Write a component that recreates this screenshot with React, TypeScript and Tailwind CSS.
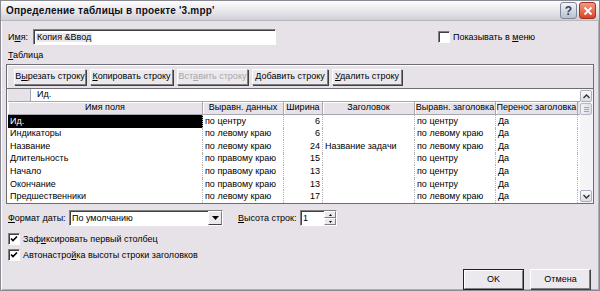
import React from 'react';

const font = { fontFamily: '"Liberation Sans", Arial, sans-serif' };

function U({ children }: { children: React.ReactNode }) {
  return <span className="underline underline-offset-[1px]">{children}</span>;
}

function Btn({ children, w, disabled }: { children: React.ReactNode; w: string; disabled?: boolean }) {
  return (
    <div
      className={`${w} h-[16px] flex items-center justify-center border border-t-white border-l-white border-r-[#808080] border-b-[#808080] bg-[#ece9ee] shadow-[1px_1px_0_#404040] ${
        disabled ? 'text-[#a8a6ab]' : 'text-black'
      }`}
    >
      <span>{children}</span>
    </div>
  );
}

function Check({ checked }: { checked?: boolean }) {
  return (
    <div className="w-[12px] h-[12px] bg-white border border-t-[#808080] border-l-[#808080] border-r-white border-b-white shadow-[inset_1px_1px_0_#404040] flex items-center justify-center">
      {checked && (
        <svg width="8" height="8" viewBox="0 0 8 8">
          <path d="M1 3.5 L3 5.5 L7 1.5" stroke="#000" strokeWidth="1.6" fill="none" />
        </svg>
      )}
    </div>
  );
}

const cols = [
  { name: 'Имя поля', w: 'w-[195px]' },
  { name: 'Выравн. данных', w: 'w-[81px]' },
  { name: 'Ширина', w: 'w-[39px]' },
  { name: 'Заголовок', w: 'w-[92px]' },
  { name: 'Выравн. заголовка', w: 'w-[81px]' },
  { name: 'Перенос заголовка', w: 'w-[82px]' },
];

const rows = [
  ['Ид.', 'по центру', '6', '', 'по центру', 'Да'],
  ['Индикаторы', 'по левому краю', '6', '', 'по левому краю', 'Да'],
  ['Название', 'по левому краю', '24', 'Название задачи', 'по левому краю', 'Да'],
  ['Длительность', 'по правому краю', '15', '', 'по центру', 'Да'],
  ['Начало', 'по правому краю', '13', '', 'по центру', 'Да'],
  ['Окончание', 'по правому краю', '13', '', 'по центру', 'Да'],
  ['Предшественники', 'по левому краю', '17', '', 'по левому краю', 'Да'],
];

const sunken =
  'bg-white border border-t-[#808080] border-l-[#808080] border-r-white border-b-white shadow-[inset_1px_1px_0_#404040]';

export default function App() {
  return (
    <div
      style={font}
      className="w-[600px] h-[291px] bg-[#e6e2e8] text-[9px] text-black whitespace-nowrap border border-[#8a8a94] shadow-[inset_1px_1px_0_#ffffff,inset_-1px_-1px_0_#b0aeb6] flex flex-col overflow-hidden leading-none"
    >
      {/* Title bar */}
      <div className="h-[22px] flex items-center justify-between pl-[5px] pr-[3px] bg-gradient-to-b from-[#fdfdfd] via-[#e9e9ed] to-[#cfcfd6] border-b border-[#b8b6be]">
        <span className="font-bold text-[10px] tracking-[0.2px] text-[#101018]">Определение таблицы в проекте '3.mpp'</span>
        <div className="flex gap-[2px]">
          <div className="w-[17px] h-[17px] rounded-[3px] border border-[#7f8696] bg-gradient-to-b from-[#f4f6fa] to-[#b9bfcc] flex items-center justify-center font-bold text-[12px] text-[#3a4252]">
            ?
          </div>
          <div className="w-[17px] h-[17px] rounded-[3px] border border-[#a03020] bg-gradient-to-b from-[#f19a7f] to-[#d8401f] flex items-center justify-center">
            <svg width="10" height="10" viewBox="0 0 10 10">
              <path d="M1.5 1.5 L8.5 8.5 M8.5 1.5 L1.5 8.5" stroke="#fff" strokeWidth="1.8" />
            </svg>
          </div>
        </div>
      </div>

      <div className="flex-1 px-[5px] flex flex-col">
        {/* Name row */}
        <div className="flex items-center mt-[8px] h-[16px]">
          <span className="w-[27px] pl-[2px]">
            И<U>м</U>я:
          </span>
          <div className={`w-[243px] h-[16px] ${sunken} flex items-center pl-[2px]`}>
            <span className="bg-[#e8e8ee] px-[1px]">Копия &amp;Ввод</span>
          </div>
          <div className="flex items-center gap-[3px] ml-[162px]">
            <Check />
            <span>
              Показывать в <U>м</U>еню
            </span>
          </div>
        </div>

        <div className="mt-[6px] pl-[2px] h-[12px]">
          <U>Т</U>аблица
        </div>

        {/* Toolbar */}
        <div className="mt-[1px] h-[25px] border border-[#6e6c74] shadow-[inset_1px_1px_0_#ffffff] flex items-center gap-[4px] pl-[7px]">
          <Btn w="w-[72px]">
            В<U>ы</U>резать строку
          </Btn>
          <Btn w="w-[83px]">
            <U>К</U>опировать строку
          </Btn>
          <Btn w="w-[71px]" disabled>
            Вст<U>а</U>вить строку
          </Btn>
          <Btn w="w-[76px]">
            <U>Д</U>обавить строку
          </Btn>
          <Btn w="w-[70px]">
            <U>У</U>далить строку
          </Btn>
        </div>

        {/* Grid */}
        <div className="h-[115px] border border-t-0 border-[#6e6c74] flex">
          <div className="flex-1 flex flex-col pl-[1px] bg-white">
            {/* edit row */}
            <div className="h-[13px] flex border-b border-[#a8a6ae]">
              <div className="w-[23px] bg-[#e6e2e8] border-r border-[#a8a6ae]" />
              <div className="flex-1 bg-white flex items-center pl-[6px]">Ид.</div>
            </div>
            {/* header */}
            <div className="h-[13px] flex bg-[#e6e2e8] border-b border-[#a8a6ae]">
              {cols.map((c) => (
                <div
                  key={c.name}
                  className={`${c.w} flex items-center justify-center border-r border-[#a8a6ae] shadow-[inset_1px_1px_0_#ffffff] overflow-hidden`}
                >
                  {c.name}
                </div>
              ))}
            </div>
            {rows.map((r, i) => (
              <div key={i} className="h-[12.6px] flex">
                {r.map((v, j) => (
                  <div
                    key={j}
                    className={`${cols[j].w} flex items-center overflow-hidden border-r border-dotted border-[#b4b2b8] ${
                      j === 2 ? 'justify-end pr-[2px]' : 'pl-[2px]'
                    } ${i === 0 && j === 0 ? 'bg-black text-white' : ''}`}
                  >
                    {v}
                  </div>
                ))}
              </div>
            ))}
          </div>
          {/* scrollbar */}
          <div className="w-[13px] bg-[#f4f3f6] flex flex-col justify-between py-[1px] pr-[1px]">
            <div className="flex flex-col">
              <div className="h-[12px] rounded-[2px] border border-[#a9aec0] bg-gradient-to-b from-[#fbfbfd] to-[#dcdde6] flex items-center justify-center">
                <svg width="7" height="5" viewBox="0 0 7 5">
                  <path d="M0.5 4 L3.5 1 L6.5 4" stroke="#333" strokeWidth="1.4" fill="none" />
                </svg>
              </div>
              <div className="h-[12px] mt-[1px] rounded-[2px] border border-[#b4b8c8] bg-gradient-to-r from-[#f2f2f6] to-[#dcdde6] flex flex-col items-center justify-center gap-[1px]">
                <div className="w-[5px] h-px bg-[#a0a4b4]" />
                <div className="w-[5px] h-px bg-[#a0a4b4]" />
                <div className="w-[5px] h-px bg-[#a0a4b4]" />
              </div>
            </div>
            <div className="h-[12px] rounded-[2px] border border-[#a9aec0] bg-gradient-to-b from-[#fbfbfd] to-[#dcdde6] flex items-center justify-center">
              <svg width="7" height="5" viewBox="0 0 7 5">
                <path d="M0.5 1 L3.5 4 L6.5 1" stroke="#333" strokeWidth="1.4" fill="none" />
              </svg>
            </div>
          </div>
        </div>

        {/* Date format row */}
        <div className="flex items-center mt-[6px] h-[16px]">
          <span className="w-[63px] pl-[2px]">
            <U>Ф</U>ормат даты:
          </span>
          <div className={`w-[154px] h-[16px] ${sunken} flex items-center justify-between pl-[2px]`}>
            <span>По умолчанию</span>
            <div className="w-[14px] h-[14px] bg-[#ece9ee] border border-t-white border-l-white border-r-[#808080] border-b-[#404040] flex items-center justify-center">
              <svg width="7" height="4" viewBox="0 0 7 4">
                <path d="M0 0 H7 L3.5 4 Z" fill="#000" />
              </svg>
            </div>
          </div>
          <span className="ml-[15px] w-[62px]">
            <U>В</U>ысота строк:
          </span>
          <div className={`w-[37px] h-[16px] ${sunken} flex items-center justify-between pl-[2px]`}>
            <span>1</span>
            <div className="w-[12px] h-[14px] flex flex-col">
              <div className="flex-1 bg-[#ece9ee] border border-t-white border-l-white border-r-[#808080] border-b-[#808080] flex items-center justify-center">
                <svg width="3" height="2" viewBox="0 0 3 2">
                  <path d="M0 2 L1.5 0 L3 2 Z" fill="#000" />
                </svg>
              </div>
              <div className="flex-1 bg-[#ece9ee] border border-t-white border-l-white border-r-[#808080] border-b-[#808080] flex items-center justify-center">
                <svg width="3" height="2" viewBox="0 0 3 2">
                  <path d="M0 0 L1.5 2 L3 0 Z" fill="#000" />
                </svg>
              </div>
            </div>
          </div>
        </div>

        <div className="flex items-center gap-[3px] mt-[7px] pl-[2px] h-[12px]">
          <Check checked />
          <span>
            Заф<U>и</U>ксировать первый столбец
          </span>
        </div>
        <div className="flex items-center gap-[3px] mt-[4px] pl-[2px] h-[12px]">
          <Check checked />
          <span>
            Автонастро<U>й</U>ка высоты строки заголовков
          </span>
        </div>

        <div className="flex justify-end gap-[6px] mt-[8px] pr-[3px]">
          <div className="w-[61px] h-[21px] border border-[#202020] flex">
            <div className="flex-1 flex items-center justify-center bg-[#ece9ee] border border-t-white border-l-white border-r-[#808080] border-b-[#808080]">
              OK
            </div>
          </div>
          <div className="w-[61px] h-[21px] flex items-center justify-center bg-[#ece9ee] border border-t-white border-l-white border-r-[#404040] border-b-[#404040] shadow-[inset_-1px_-1px_0_#808080]">
            Отмена
          </div>
        </div>
      </div>
    </div>
  );
}
